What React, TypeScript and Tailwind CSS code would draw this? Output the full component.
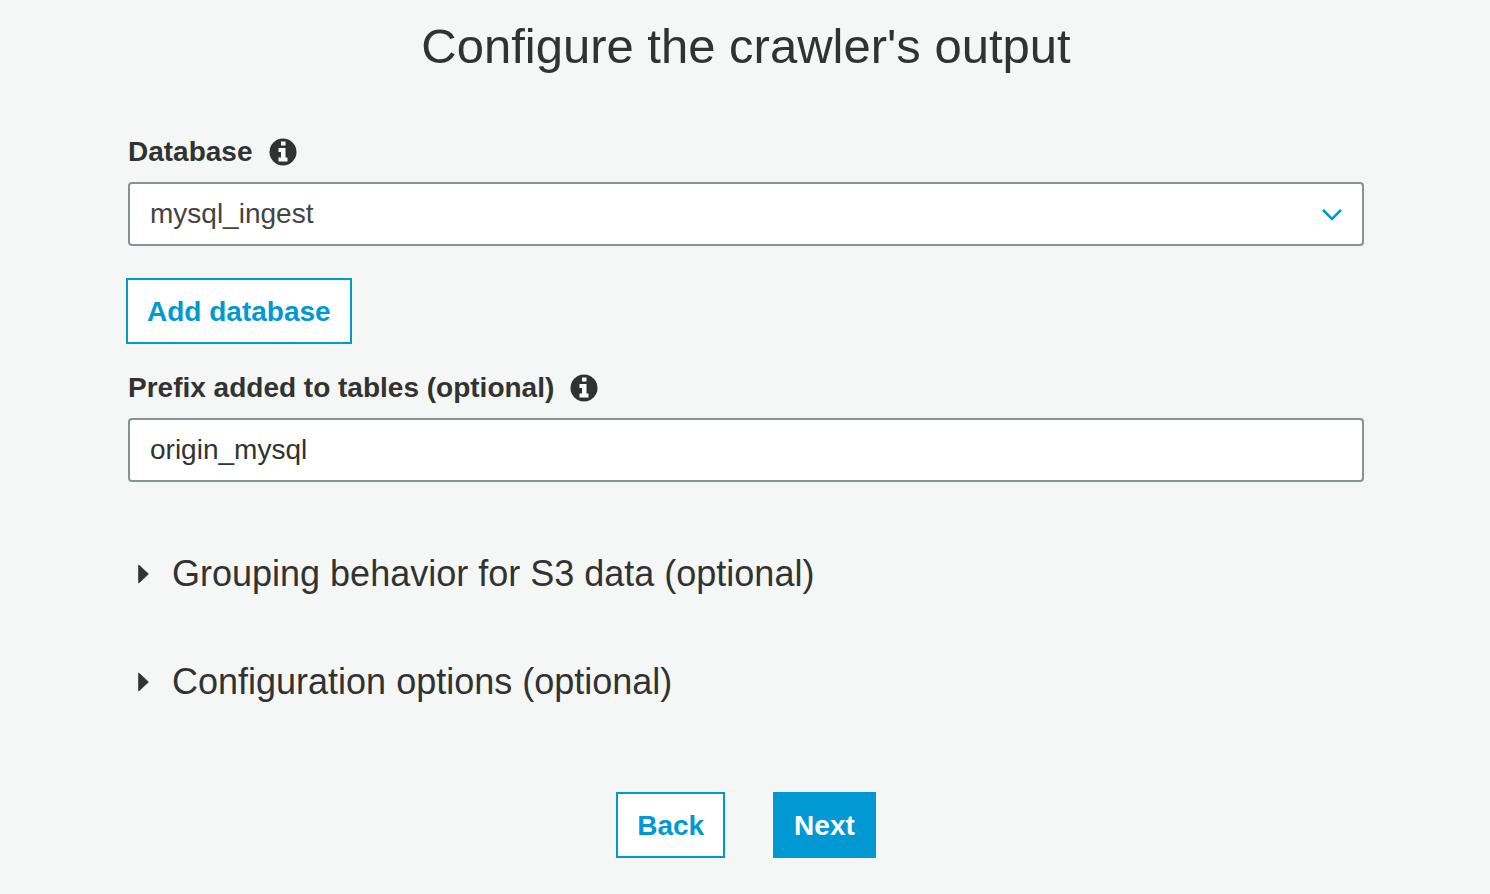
import type { ReactNode } from "react";

function InfoIcon() {
  return (
    <svg viewBox="0 0 28 28" className="size-7 shrink-0" aria-hidden="true">
      <circle cx="14" cy="14" r="13.5" fill="#303332" />
      <path
        d="M12 3.500h4.500v4H12zM9.500 10h7v9.500h2V23.500H9.500v-4h2.500v-5.500H9.500z"
        fill="#fff"
      />
    </svg>
  );
}

function FieldLabel({ htmlFor, children }: { htmlFor: string; children: ReactNode }) {
  return (
    <div className="flex h-8 items-center gap-4">
      <label htmlFor={htmlFor} className="text-[28px] leading-8 font-bold">
        {children}
      </label>
      <InfoIcon />
    </div>
  );
}

function Section({ title }: { title: string }) {
  return (
    <button type="button" className="flex items-center gap-5.5 pl-2.5 text-left text-4xl leading-10">
      <svg viewBox="0 0 12 20" className="h-5 w-3 shrink-0" aria-hidden="true">
        <path d="M0.500 1.500Q0.500 0.500 1.500 1.500L10.500 10 1.500 18.500Q0.500 19.500 0.500 18.500z" fill="#303332" stroke="#303332" strokeWidth="0.600" />
      </svg>
      {title}
    </button>
  );
}

export default function App() {
  return (
    <main className="min-h-screen bg-[#f5f7f6] pt-4 pr-[126px] pb-9 pl-32 font-['Liberation_Sans',Arial,sans-serif] text-[#303332]">
      <h1 className="text-center text-[49px] leading-[60px]">Configure the crawler's output</h1>
      <form className="flex flex-col pt-15" onSubmit={(e) => e.preventDefault()}>
        <FieldLabel htmlFor="database">Database</FieldLabel>
        <div className="relative mt-3.5">
          <select
            id="database"
            className="h-16 w-full appearance-none rounded border-2 border-[#879196] bg-white px-5 text-[28px] text-[#444]"
          >
            <option>mysql_ingest</option>
          </select>
          <svg
            viewBox="0 0 20 12"
            className="pointer-events-none absolute top-[27px] right-[22px] h-3 w-5"
            fill="none"
            stroke="#0099d6"
            strokeWidth="2.600"
            aria-hidden="true"
          >
            <path d="M1 1 10 10 19 1" />
          </svg>
        </div>
        <button
          type="button"
          className="mt-8 -ml-0.5 h-[66px] self-start border-2 border-[#0099d3] bg-white px-[19px] pt-0.5 text-[28px] font-bold text-[#0099d3]"
        >
          Add database
        </button>
        <div className="mt-7">
          <FieldLabel htmlFor="prefix">Prefix added to tables (optional)</FieldLabel>
        </div>
        <input
          id="prefix"
          type="text"
          defaultValue="origin_mysql"
          className="mt-3.5 h-16 w-full rounded border-2 border-[#879196] bg-white px-5 text-[28px]"
        />
        <div className="flex flex-col items-start gap-17 pt-18">
          <Section title="Grouping behavior for S3 data (optional)" />
          <Section title="Configuration options (optional)" />
        </div>
        <div className="flex justify-center gap-12 pt-[90px]">
          <button
            type="button"
            className="h-[66px] border-2 border-[#0099d3] bg-white px-[19px] pt-0.5 text-[28px] font-bold text-[#0099d3]"
          >
            Back
          </button>
          <button type="submit" className="h-[66px] bg-[#0099d3] px-[21px] pt-0.5 text-[28px] font-bold text-white">
            Next
          </button>
        </div>
      </form>
    </main>
  );
}
